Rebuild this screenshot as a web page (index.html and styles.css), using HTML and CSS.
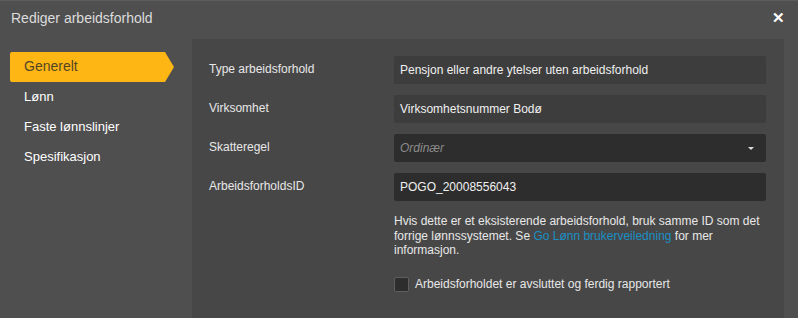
FILE: index.html
```html
<!DOCTYPE html>
<html>
<head>
    <title>Rediger arbeidsforhold</title>
    <link rel="stylesheet" href="styles.css">
</head>
<body>
    <div class="modal">
        <div class="modal-header">
            <span class="modal-title">Rediger arbeidsforhold</span>
            <span class="close">&#x2715;</span>
        </div>
        <div class="modal-body">
            <ul class="side-nav">
                <li class="active">Generelt</li>
                <li>Lønn</li>
                <li>Faste lønnslinjer</li>
                <li>Spesifikasjon</li>
            </ul>
            <div class="panel">
                <div class="form-row">
                    <label>Type arbeidsforhold</label>
                    <div class="field readonly">Pensjon eller andre ytelser uten arbeidsforhold</div>
                </div>
                <div class="form-row">
                    <label>Virksomhet</label>
                    <div class="field readonly">Virksomhetsnummer Bodø</div>
                </div>
                <div class="form-row">
                    <label>Skatteregel</label>
                    <div class="field select"><span class="placeholder">Ordinær</span><span class="caret"></span></div>
                </div>
                <div class="form-row">
                    <label>ArbeidsforholdsID</label>
                    <div class="field">POGO_20008556043</div>
                </div>
                <div class="form-row">
                    <label></label>
                    <p class="help">Hvis dette er et eksisterende arbeidsforhold, bruk samme ID som det forrige lønnssystemet. Se <a href="#">Go Lønn brukerveiledning</a> for mer informasjon.</p>
                </div>
                <div class="form-row">
                    <label></label>
                    <div class="check">
                        <span class="box"></span>
                        <span>Arbeidsforholdet er avsluttet og ferdig rapportert</span>
                    </div>
                </div>
            </div>
        </div>
    </div>
</body>
</html>
```

FILE: styles.css
```css
body {
    margin: 0;
    font-family: "Liberation Sans", Arial, sans-serif;
    background-color: #4f4f4f;
    color: #e8e8e8;
}
.modal {
    width: 798px;
    height: 318px;
    background-color: #4f4f4f;
    border-top: 1px solid #5c5c5c;
    box-sizing: border-box;
    overflow: hidden;
}
.modal-header {
    height: 38px;
    display: flex;
    align-items: center;
    justify-content: space-between;
    padding: 0 13px 0 11px;
}
.modal-title {
    font-size: 14px;
    color: #dcdcdc;
    margin-top: -4px;
}
.close {
    font-size: 15px;
    font-weight: bold;
    color: #fff;
    margin-top: -4px;
}
.modal-body {
    display: flex;
}
.side-nav {
    list-style: none;
    margin: 0;
    padding: 13px 0 0 10px;
    width: 182px;
    box-sizing: border-box;
}
.side-nav li {
    height: 30px;
    line-height: 29px;
    padding-left: 14px;
    font-size: 13px;
    color: #fff;
    width: 164px;
    box-sizing: border-box;
}
.side-nav li.active {
    background-color: #feb614;
    color: #554527;
    font-size: 14px;
    border-radius: 2px 0 0 2px;
    clip-path: polygon(0 0, 155px 0, 164px 50%, 155px 100%, 0 100%);
}
.panel {
    background-color: #474747;
    width: 592px;
    height: 280px;
    margin-left: 10px;
    padding: 17px 18px 0 17px;
    box-sizing: border-box;
}
.form-row {
    display: flex;
    margin-bottom: 11px;
}
.form-row label {
    width: 185px;
    flex-shrink: 0;
    font-size: 12px;
    padding-top: 6px;
}
.field {
    flex: 1;
    height: 28px;
    line-height: 28px;
    padding: 0 6px;
    background-color: #2d2d2d;
    border-radius: 2px;
    font-size: 12px;
    color: #f0f0f0;
}
.field.readonly {
    background-color: #3d3d3d;
}
.field.select {
    display: flex;
    justify-content: space-between;
    align-items: center;
}
.placeholder {
    color: #8c8c8c;
    font-style: italic;
}
.caret {
    width: 0;
    height: 0;
    border-left: 3px solid transparent;
    border-right: 3px solid transparent;
    border-top: 3px solid #ddd;
    margin-right: 6px;
}
.help {
    flex: 1;
    margin: 2px 0 0 0;
    font-size: 12px;
    line-height: 14.5px;
    color: #e8e8e8;
    padding-right: 4px;
}
.help a {
    color: #1a8fc4;
    text-decoration: none;
}
.check {
    display: flex;
    align-items: center;
    font-size: 12px;
    margin-top: 8px;
}
.box {
    width: 13px;
    height: 13px;
    background-color: #2d2d2d;
    border: 1px solid #5e5e5e;
    border-radius: 2px;
    margin-right: 6px;
}
```
